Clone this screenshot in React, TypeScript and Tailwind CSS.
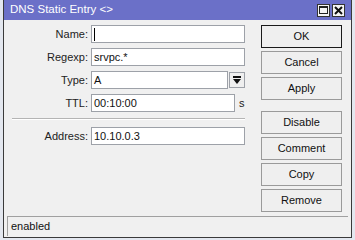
import React from "react";

const font = { fontFamily: '"Liberation Sans", Arial, sans-serif' };

function Field({ label, value, caret }: { label: string; value?: string; caret?: boolean }) {
  return (
    <div className="flex items-center h-[18px]">
      <div className="w-[87px] text-right text-[11px] text-[#222] pr-[3px]">{label}</div>
      <div className="w-[154px] h-[18px] bg-white border border-[#9da1a8] flex items-center pl-[2px] text-[11px] text-[#111]">
        {caret && <span className="w-px h-[13px] bg-black" />}
        {value}
      </div>
    </div>
  );
}

function Btn({ label, primary }: { label: string; primary?: boolean }) {
  return (
    <div
      className={
        "w-[81px] h-[23px] flex items-center justify-center text-[11px] text-[#111] bg-[#efefef] border " +
        (primary ? "border-[#1a1a1a]" : "border-[#9a9a9a]")
      }
    >
      {label}
    </div>
  );
}

export default function App() {
  return (
    <div className="w-[355px] h-[240px] bg-[#e3e7ef] overflow-hidden" style={font}>
      <div className="ml-[3px] w-[349px] h-[238px] border-x border-b border-[#3a3a3a] bg-[#f0f0f0] flex flex-col">
        <div className="h-[20px] bg-[#6b70c8] flex items-center justify-between pl-[6px] pr-[6px] shrink-0">
          <span className="text-white text-[11.5px]">DNS Static Entry &lt;&gt;</span>
          <div className="flex gap-[2px]">
            <div className="w-[13px] h-[13px] bg-[#f4f4f4] border border-[#333] flex items-center justify-center">
              <div className="w-[9px] h-[8px] border border-[#222] border-t-2" />
            </div>
            <div className="w-[13px] h-[13px] bg-[#f4f4f4] border border-[#333] flex items-center justify-center">
              <svg width="9" height="9" viewBox="0 0 9 9">
                <path d="M1 1L8 8M8 1L1 8" stroke="#111" strokeWidth="2" />
              </svg>
            </div>
          </div>
        </div>

        <div className="flex flex-1 pt-[5px]">
          <div className="flex flex-col gap-[5px] w-[257px]">
            <Field label="Name:" caret />
            <Field label="Regexp:" value="srvpc.*" />
            <div className="flex items-center h-[18px]">
              <div className="w-[87px] text-right text-[11px] text-[#222] pr-[3px]">Type:</div>
              <div className="w-[137px] h-[18px] bg-white border border-[#9da1a8] flex items-center pl-[2px] text-[11px] text-[#111]">
                A
              </div>
              <div className="ml-px w-[16px] h-[16px] bg-[#efefef] border border-[#9da1a8] flex items-center justify-center">
                <svg width="8" height="9" viewBox="0 0 8 9">
                  <rect x="0" y="0" width="8" height="2" fill="#111" />
                  <path d="M0 3H8L4 8Z" fill="#111" />
                </svg>
              </div>
            </div>
            <div className="flex items-center h-[18px]">
              <div className="w-[87px] text-right text-[11px] text-[#222] pr-[3px]">TTL:</div>
              <div className="w-[144px] h-[18px] bg-white border border-[#9da1a8] flex items-center pl-[2px] text-[11px] text-[#111]">
                00:10:00
              </div>
              <span className="ml-[4px] text-[11px] text-[#222]">s</span>
            </div>
            <div className="ml-[8px] w-[233px] mt-px mb-[2px] border-t border-[#b4b4b4] border-b border-b-white" />
            <Field label="Address:" value="10.10.0.3" />
          </div>

          <div className="flex flex-col gap-[3px]">
            <Btn label="OK" primary />
            <Btn label="Cancel" />
            <Btn label="Apply" />
            <div className="h-[5px]" />
            <Btn label="Disable" />
            <Btn label="Comment" />
            <Btn label="Copy" />
            <Btn label="Remove" />
          </div>
        </div>

        <div className="mx-[3px] mb-[1px] h-[20px] border-t border-l border-[#a0a0a0] flex items-center pl-[3px] text-[11px] text-[#111]">
          enabled
        </div>
      </div>
    </div>
  );
}
